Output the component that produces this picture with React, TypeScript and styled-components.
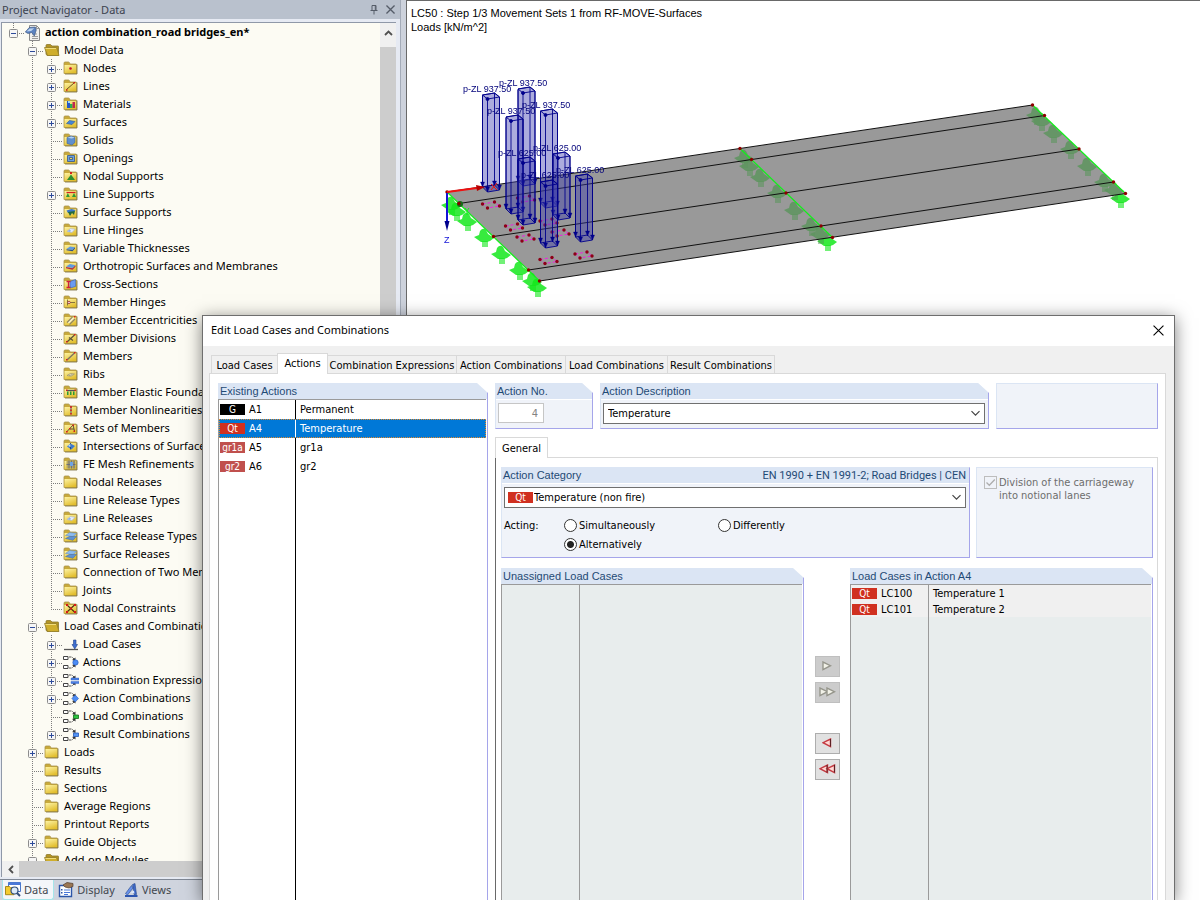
import React from 'react';
import styled, { createGlobalStyle } from 'styled-components';

const GlobalStyle = createGlobalStyle`
  * { box-sizing: border-box; }
  body { margin: 0; background: #cdd2dc; overflow: hidden; }
  button, input, select { font: inherit; color: inherit; margin: 0; }
`;

const uiFont = '"Noto Sans", "Open Sans", sans-serif';
const dialogFont = '"DejaVu Sans Condensed", "DejaVu Sans", sans-serif';
const headFont = '"Liberation Sans", Arial, sans-serif';

/* ---------- desktop ---------- */
const Desktop = styled.div`
  position: relative;
  display: flex;
  height: 100vh;
  min-height: 600px;
  overflow: hidden;
  background: #cdd2dc;
  font: 11px/18px ${uiFont};
  color: #000;
`;

const Navigator = styled.aside`
  width: 401px;
  flex: none;
  display: flex;
  flex-direction: column;
  background: #e6eaf3;
  border-right: 1px solid #a3abb8;
`;

const NavTitle = styled.header`
  height: 19px;
  flex: none;
  display: flex;
  align-items: center;
  gap: 8px;
  padding: 0 5px 0 2px;
  background: #b9c1cd;
  color: #3c4350;
  h1 { flex: 1; margin: 0; font-size: 11px; font-weight: 400; }
`;

const IconButton = styled.button`
  display: flex;
  padding: 0;
  border: 0;
  background: none;
`;

const NavFrame = styled.div`
  flex: 1;
  min-height: 0;
  display: grid;
  grid-template: minmax(0, 1fr) 16px / minmax(0, 1fr) 16px;
  margin: 3px 4px 2px 1px;
  border: solid #8f98a8;
  border-width: 1px 0 0 1px;
  background: #fcfbf3;
`;

const Tree = styled.ul`
  margin: 0;
  padding: 0 0 0 2px;
  list-style: none;
  overflow: hidden;
`;

const TreeRow = styled.li`
  display: flex;
  height: 18px;
  white-space: nowrap;
`;

const Indent = styled.span<{ $line?: boolean }>`
  width: 19px;
  flex: none;
  background: ${p => (p.$line ? 'repeating-linear-gradient(#7d7d7d 0 1px, transparent 1px 2px) 9px 0 / 1px 100% no-repeat' : 'none')};
`;

const Branch = styled.span<{ $end?: boolean }>`
  width: 21px;
  flex: none;
  padding: 6px 0 0 5px;
  background:
    repeating-linear-gradient(#7d7d7d 0 1px, transparent 1px 2px) 9px 0 / 1px ${p => (p.$end ? '10px' : '100%')} no-repeat,
    repeating-linear-gradient(90deg, #7d7d7d 0 1px, transparent 1px 2px) 9px 10px / 11px 1px no-repeat;
`;

const Expander = styled.button`
  display: block;
  width: 9px;
  height: 9px;
  padding: 0;
  border: 0;
  background: none;
  svg { display: block; }
`;

const NodeIcon = styled.span`
  width: 20px;
  flex: none;
  padding-top: 2px;
  svg { display: block; }
`;

const NodeLabel = styled.span<{ $bold?: boolean }>`
  font-weight: ${p => (p.$bold ? 700 : 400)};
`;

const VScroll = styled.div`
  display: flex;
  flex-direction: column;
  background: #f0f0f0;
  button { height: 24px; padding-bottom: 4px; align-items: center; justify-content: center; }
`;
const VThumb = styled.div`
  flex: 1;
  background: #cdcdcd;
`;
const HScroll = styled.div`
  grid-column: 1 / -1;
  display: flex;
  background: #f0f0f0;
  button { width: 17px; align-items: center; justify-content: center; }
`;
const HThumb = styled.div`
  width: 240px;
  background: #cdcdcd;
`;

const NavTabs = styled.nav`
  height: 21px;
  flex: none;
  display: flex;
  gap: 2px;
  padding-left: 2px;
  border-top: 1px solid #7f8794;
  background: #cfd4de;
  line-height: 20px;
`;
const NavTab = styled.button<{ $active?: boolean }>`
  display: flex;
  align-items: center;
  gap: 3px;
  height: 20px;
  padding: 0 5px 0 2px;
  border: solid #a6e6ea;
  border-width: ${p => (p.$active ? '0 1px 1px' : '0')};
  border-radius: 0 0 3px 3px;
  background: ${p => (p.$active ? '#f4f6f9' : 'none')};
  color: #42474f;
`;

/* ---------- work area ---------- */
const Viewport = styled.main`
  flex: 1;
  min-width: 0;
  margin-left: 5px;
  border: solid #696969;
  border-width: 1px 0 0 1px;
  background: #fff;
  overflow: hidden;
`;
const ViewTitle = styled.p`
  height: 36px;
  margin: 0;
  padding: 5px 4px 0;
  font: 11px/14px ${headFont};
`;
const Drawing = styled.svg`
  display: block;
  width: 793px;
  height: 280px;
  text { font: 9px ${headFont}; }
`;

/* ---------- dialog ---------- */
const Dialog = styled.section`
  position: absolute;
  left: 202px;
  right: 25px;
  top: 315px;
  bottom: 0;
  display: flex;
  flex-direction: column;
  border: solid #6e6e6e;
  border-width: 1px 1px 0;
  background: #f0f0f0;
  box-shadow: 0 3px 16px rgba(0, 0, 0, 0.5);
  font: 11px/13px ${dialogFont};
`;
const DialogTitle = styled.header`
  height: 30px;
  flex: none;
  display: flex;
  align-items: center;
  justify-content: space-between;
  padding: 0 10px 2px 8px;
  background: #fff;
  h2 { margin: 0; font: 400 11px/16px ${uiFont}; }
`;
const TabStrip = styled.div`
  height: 27px;
  flex: none;
  display: flex;
  align-items: flex-end;
  padding-left: 9px;
`;
const Tab = styled.button<{ $active?: boolean; $width: number }>`
  position: relative;
  width: ${p => p.$width}px;
  height: ${p => (p.$active ? 21 : 18)}px;
  margin: 0 0 ${p => (p.$active ? -1 : 0)}px -1px;
  padding: ${p => (p.$active ? '0 0 1px' : '1px 0 0')};
  border: 1px solid #d9d9d9;
  border-bottom: 0;
  background: ${p => (p.$active ? '#fff' : '#f0f0f0')};
  z-index: ${p => (p.$active ? 1 : 0)};
  white-space: nowrap;
`;
const TabPanel = styled.div`
  flex: 1;
  min-height: 0;
  display: grid;
  grid-template-columns: 270px minmax(0, 1fr);
  gap: 7px;
  margin: 0 8px 0 6px;
  padding: 9px 7px 0 8px;
  border: 1px solid #d9d9d9;
  border-bottom: 0;
  background: #fff;
`;
const Details = styled.div`
  display: flex;
  flex-direction: column;
  min-height: 0;
`;
const TopRow = styled.div`
  display: grid;
  grid-template-columns: 98px minmax(0, 1fr) 162px;
  gap: 7px;
  height: 46px;
  margin-bottom: 8px;
`;

const Group = styled.section<{ $cut?: boolean; $plain?: boolean; $open?: boolean }>`
  display: flex;
  flex-direction: column;
  min-height: 0;
  border: 1px solid #a5a5ea;
  border-left-color: #dbe5f4;
  border-top-color: #dbe5f4;
  border-bottom-width: ${p => (p.$open ? 0 : 1)}px;
  background: ${p => (p.$plain ? '#fff' : '#f0f3f9')};
  clip-path: ${p => (p.$cut ? 'polygon(0 0, calc(100% - 11px) 0, 100% 10px, 100% 100%, 0 100%)' : 'none')};
`;
const GroupHead = styled.h3`
  display: flex;
  justify-content: space-between;
  height: 16px;
  flex: none;
  margin: 0;
  padding: 0 3px 0 1px;
  border-bottom: 1px solid #fff;
  background: #dbe5f4;
  color: #1f4a75;
  font: 400 11px/15px ${headFont};
`;
const Standard = styled.span`
  font-family: Roboto, sans-serif;
`;

const List = styled.div<{ $shaded?: boolean }>`
  flex: 1;
  min-height: 0;
  border: solid #9a9a9a;
  border-width: 1px 0 0 1px;
  margin: -1px 1px 0 -1px;
  background: ${p => (p.$shaded ? '#e8eded' : '#fff')};
`;
const Columns = styled.table<{ $first: number; $line: string; $row: number }>`
  width: 100%;
  height: 100%;
  table-layout: fixed;
  border-collapse: separate;
  border-spacing: 0;
  td { padding: 0; height: ${p => p.$row}px; white-space: nowrap; }
  td:first-child { width: ${p => p.$first}px; border-right: 1px solid ${p => p.$line}; }
  td + td { padding-left: 4px; }
  tr:last-child td { height: auto; }
`;
const Row = styled.tr<{ $selected?: boolean; $gray?: boolean }>`
  background: ${p => (p.$selected ? '#0078d7' : p.$gray ? '#f0f0f0' : 'transparent')};
  color: ${p => (p.$selected ? '#fff' : '#000')};
  outline: ${p => (p.$selected ? '1px dotted #e08a30' : 'none')};
  outline-offset: -1px;
  && td:first-child { ${p => (p.$selected ? 'border-right-color: #fff;' : '')} }
`;
const Tag = styled.span<{ $color: string }>`
  display: inline-block;
  width: 25px;
  height: 11px;
  margin: 0 4px 1px 1px;
  background: ${p => p.$color};
  color: #fff;
  font-size: 10px;
  line-height: 11px;
  text-align: center;
  vertical-align: middle;
`;

const NumberBox = styled.input`
  width: 46px;
  height: 20px;
  margin: 3px 0 0 2px;
  padding: 0 5px;
  border: 1px solid #c6c6c6;
  background: #fff;
  color: #838383;
  text-align: right;
`;
const Combo = styled.div`
  position: relative;
  display: flex;
  align-items: center;
  height: 21px;
  margin: 3px 3px 0 2px;
  border: 1px solid #707070;
  background: #fff;
  svg { position: absolute; right: 3px; pointer-events: none; }
  select {
    flex: 1;
    min-width: 0;
    height: 19px;
    padding: 0 4px;
    border: 0;
    background: none;
    appearance: none;
  }
`;
const TaggedCombo = styled(Combo)`
  span { margin: 0 0 0 3px; }
  select { padding: 0 1px; }
`;

const GeneralTab = styled.button`
  position: relative;
  z-index: 1;
  width: 53px;
  height: 21px;
  flex: none;
  margin-bottom: -1px;
  padding: 0;
  border: 1px solid #d9d9d9;
  border-bottom: 0;
  background: #fff;
`;
const GeneralPanel = styled.div`
  flex: 1;
  min-height: 0;
  display: grid;
  grid-template-rows: 91px minmax(0, 1fr);
  gap: 10px;
  padding: 9px 4px 0 5px;
  border: solid #d9d9d9;
  border-width: 1px 1px 0 1px;
  border-left-color: #696969;
`;
const CategoryRow = styled.div`
  display: grid;
  grid-template-columns: minmax(0, 1fr) 177px;
  gap: 6px;
`;
const Acting = styled.fieldset`
  display: grid;
  grid-template-columns: 60px 154px 1fr;
  margin: 8px 0 0 2px;
  padding: 0;
  border: 0;
  line-height: 19px;
`;
const ActingName = styled.span`
  grid-row: span 2;
`;
const Choice = styled.label`
  display: flex;
  align-items: center;
  gap: 2px;
  input {
    appearance: none;
    width: 13px;
    height: 13px;
    border: 1px solid #333;
    border-radius: 50%;
    background: #fff;
  }
  input:checked { background: radial-gradient(#222 0 3px, #fff 4px); }
`;
const Division = styled.label`
  display: flex;
  gap: 2px;
  padding: 8px 7px;
  color: #6d6d6d;
`;
const CheckWrap = styled.span`
  position: relative;
  width: 13px;
  height: 13px;
  flex: none;
  input { appearance: none; display: block; width: 13px; height: 13px; border: 1px solid #bdbdbd; }
  svg { position: absolute; left: 1px; top: 1px; }
`;
const Transfer = styled.div`
  display: grid;
  grid-template-columns: minmax(0, 1fr) 46px minmax(0, 1fr);
  min-height: 0;
`;
const MoveColumn = styled.div`
  display: flex;
  flex-direction: column;
  align-items: center;
  gap: 5px;
  padding-top: 88px;
`;
const MoveButton = styled.button<{ $space?: boolean }>`
  display: flex;
  align-items: center;
  justify-content: center;
  width: 25px;
  height: 21px;
  flex: none;
  margin-top: ${p => (p.$space ? 25 : 0)}px;
  padding: 0 0 1px;
  border: 1px solid #adadad;
  background: #e1e1e1;
  &:disabled { background: #cccccc; border-color: #bfbfbf; }
`;

/* ---------- icons ---------- */
const overlays: Record<string, React.ReactNode> = {
  none: null,
  dot: <circle cx="7.5" cy="7.5" r="1.3" fill="#c8102a" />,
  line: <><path d="M3.500 10.500 11 4" stroke="#6b5520" strokeWidth="1" /><path d="M3 10.200h1.500v1.500H3zM10.500 3h1.500v1.500h-1.500z" fill="#d01818" /></>,
  materials: <><path d="M4 4h3v7H4z" fill="#2557c8" /><path d="M7 7h2.500v4H7z" fill="#28b24a" /><path d="M9.500 5H12v6H9.500z" fill="#c02a50" /><path d="M5 4h2v2H5z" fill="#9ed8f4" /></>,
  surface: <path d="m3.500 8.500 3-3 5.500 1-3 3z" fill="#4686d8" stroke="#2b5a9a" strokeWidth=".6" />,
  solid: <><path d="m4 4.500 4-1.500 4 1.300v5.200L9 12l-5-1.500z" fill="#5f8fce" stroke="#3f6296" strokeWidth=".6" /><path d="m4.300 4.700 4-1.300 3.500 1.100-3 1z" fill="#b4d2f2" /></>,
  opening: <><path d="M4.500 4.500h7v6h-7z" fill="#6b9fe0" stroke="#31558c" strokeWidth=".8" /><path d="M6.500 6.500h3v2h-3z" fill="#e8d060" stroke="#31558c" strokeWidth=".8" /></>,
  nsupport: <><path d="m8 5.500 4 5.500H4z" fill="#2c8f30" /><path d="M7 3h2v2H7z" fill="#d82020" /></>,
  lsupport: <><path d="M3.500 5.500h9" stroke="#d82020" strokeWidth="1.200" /><path d="m4.800 6 2 4H3zM11 6l2 4H9z" fill="#2c9a35" /></>,
  ssupport: <><path d="m3.500 5.500 5-1.500 4 1-2 2.500-5.500.5z" fill="#3c78c8" /><path d="m5 7 2 4 2-3 2 2 1-4z" fill="#246a3c" /></>,
  slabw: <><path d="m4 8.500 3.500-3 4.500.8-3 3.200z" fill="#e6eefc" stroke="#a4b2cc" strokeWidth=".6" /><path d="m4.500 8 2.500-1.500 1 1.500-1.500 1z" fill="#8fb2ea" /></>,
  slab: <><path d="m3.500 8 3.500-2.500 5 .7-2.500 2.800z" fill="#5e9ae0" /><path d="m3.500 8.300 6 .8 2.500-2.800v1.200L9.500 10.300l-6-1z" fill="#284f88" /></>,
  ortho: <><path d="m3 7.500 4-2.500 5.500 1.200L9.500 9z" fill="#5e9ae0" /><path d="m3 8 6.500 1.300 3-3v1.500L9.500 10.700 3 9.200z" fill="#b02a4a" /></>,
  cross: <><path d="m7 4.500 5.500-2v7L7 11z" fill="#6a9af0" stroke="#3460b0" strokeWidth=".6" /><path d="M3.500 4.500h4M5.500 4.500v6M3.500 10.500h4" stroke="#d01f3a" strokeWidth="1.300" /></>,
  mhinge: <><path d="M4.500 4.500v6M6 7.500h6" stroke="#85763c" strokeWidth="1" /><circle cx="6" cy="7.500" r="1.200" fill="#fff" stroke="#a02020" strokeWidth=".8" /></>,
  mecc: <><path d="M4 9.500 9.500 4M6.500 11.500 12 6" stroke="#8d8668" strokeWidth="1.100" /><path d="M5.500 10 10.500 5" stroke="#f6f2d8" strokeWidth="1.300" /><path d="M11 3h1.500v1.500H11z" fill="#d82020" /></>,
  mdiv: <><path d="M4 11 11.500 4M6 6.500l4 3" stroke="#5b5338" strokeWidth="1.200" /><path d="M3 10h1.500v1.500H3zM11 3h1.500v1.500H11z" fill="#d82020" /></>,
  member: <><path d="M4 11 11.500 4" stroke="#7d7660" strokeWidth="1.500" /><path d="M3 10h1.500v1.500H3zM11 3h1.500v1.500H11z" fill="#d82020" /></>,
  rib: <path d="m4 8.500 3.500-2 4 .5-3.500 2.200zM6 8.500l3.500-1" fill="#f0ecd0" stroke="#a0976c" strokeWidth=".8" />,
  foundation: <><path d="M3.500 5.500h9" stroke="#555" strokeWidth="1.300" /><path d="M4 6.500h1.500V10H4zM7 6.500h1.500V10H7zM10 6.500h1.500V10H10z" fill="#2c9a35" /><path d="M3 4.500h1.500V6H3zM11.500 4.500H13V6h-1.500z" fill="#d82020" /></>,
  nonlin: <><path d="M8 3v8.500" stroke="#777" strokeWidth="1.300" /><path d="M7.200 3h1.600v2H7.200zM7.200 6.500h1.600v1.500H7.200zM7.200 10h1.600v1.500H7.200z" fill="#d82020" /></>,
  sets: <><path d="M4 10.500 10 4l1.500 6M7 8h4" stroke="#5b5338" fill="none" strokeWidth="1" /><path d="M3 10h1.700v1.500H3zM9.500 3.500H11V5H9.500zM10.500 9.500H12V11h-1.500zM6 7h1.500v1.500H6z" fill="#d82020" /></>,
  inter: <><path d="m4 7.500 3.500-3 4.500 2.500-3.500 3.500z" fill="#3c7ad0" /><path d="M7.500 4v6.500" stroke="#173c78" strokeWidth=".8" /><path d="m5 7 2.500-2v3z" fill="#bfe0ff" /></>,
  mesh: <><path d="M3.500 3.500h9v8h-9z" fill="#b8a860" /><path d="M6 3.500v8M8.500 3.500v8M3.500 7.500h9M11 3.500v8" stroke="#5a6484" strokeWidth=".8" /><path d="M7 5h3v4H7z" fill="#6ea4e4" /></>,
  release: <><path d="m2.500 6.500 4-3 7 .8-3.500 3.400z" fill="#8dbcf0" stroke="#5f84b4" strokeWidth=".5" /><path d="m2.500 9.500 4-2 7-.2-3.500 4z" fill="#5f92d4" stroke="#44689a" strokeWidth=".5" /></>,
  constraint: <><path d="m4 4 7.500 7M11.500 4 4 11" stroke="#4a3010" strokeWidth="1.100" /><path d="M3 3h2v2H3zM11 3h2v2h-2zM3 10h2v2H3zM11 10h2v2h-2zM7 6.500h2v2H7z" fill="#d81818" /></>,
};

const Folder = ({ kind }: { kind: string }) => (
  <svg width="15" height="14" viewBox="0 0 15 14">
    <defs>
      <linearGradient id="fold" x1="0" y1="0" x2="0.5" y2="1">
        <stop offset="0" stopColor="#fdf3a4" />
        <stop offset="1" stopColor="#e2be2e" />
      </linearGradient>
    </defs>
    <path d="M1 2q0-1 1-1h3.500q1 0 1.500 2h6q.5 0 .5.500v9H1z" fill="#c9aa3a" stroke="#a8934c" strokeWidth=".8" />
    <path d="M1.500 4h12v8.500h-12z" fill="url(#fold)" />
    <path d="M2 13h12V3.500" fill="none" stroke="#6f6030" strokeWidth="1" opacity=".75" />
    {overlays[kind]}
  </svg>
);
const OpenFolder = () => (
  <svg width="16" height="14" viewBox="0 0 16 14">
    <path d="M2 11V2.500Q2 1.500 3 1.500h3.500L8 3h6q.5 0 .5.500v9H3z" fill="#b39424" stroke="#8d782c" strokeWidth=".8" />
    <path d="M.5 4.500H12q.5 0 .8.500l2.200 7.500H3.500z" fill="#cfae2c" stroke="#94802e" strokeWidth=".8" />
    <path d="M1.500 5.500h10.500" stroke="#f0dc78" />
  </svg>
);
const LoadCaseIcon = () => (
  <svg width="16" height="14" viewBox="0 0 16 14">
    <path d="M1 12.500h14" stroke="#555" strokeWidth="1.300" />
    <path d="M10.500 3h2.500v4.500h1.500L11.800 12 9 7.500h1.500z" fill="#3f6fd0" stroke="#22438c" strokeWidth=".6" />
  </svg>
);
const comboShape: Record<string, React.ReactNode> = {
  actions: <circle cx="12.500" cy="7.500" r="2.700" fill="#4c8cf4" stroke="#2458b8" strokeWidth=".6" />,
  expr: <path d="M8 5h8v2H8zM8 8.500h8v2H8z" fill="#4c80e4" stroke="#2c5cc0" strokeWidth=".4" />,
  acomb: <path d="m12.200 4 3.300 3.500-3.300 3.500-3.300-3.500z" fill="#4c8cf4" stroke="#2458b8" strokeWidth=".6" />,
  lcomb: <path d="M10.500 6h5v3.500h-5z" fill="#2cc440" stroke="#116a1c" strokeWidth=".8" />,
  rcomb: <path d="M10.500 6h5v3.500h-5z" fill="#5494f4" stroke="#2458b8" strokeWidth=".8" />,
};
const ComboIcon = ({ kind }: { kind: string }) => (
  <svg width="16" height="15" viewBox="0 0 16 15">
    <path d="M.5 1.500h4.500v3H.5zM.5 10.500h4.500v3H.5z" fill="#fff" stroke="#444" />
    <path d="M6 2h3l2.500 2.500M6 13h3l2.500-2.500" fill="none" stroke="#555" strokeDasharray="2.500 1" />
    <path d="M12.500 2.500V6L9 5zM12.500 12.500V9L9 10z" fill="#333" />
    {comboShape[kind]}
  </svg>
);
const ProjectIcon = () => (
  <svg width="16" height="16" viewBox="0 0 16 16">
    <path d="M4.500.5h7l3 3v12h-10z" fill="#f0f0ee" stroke="#8a8a8a" />
    <path d="M11.500.5v3h3M7 9h5M7 11.500h6M7 13.500h6" stroke="#9a9a9a" fill="none" />
    <path d="m.3 7 4-4.500 6-.5 1 3-2 6-2.500-3.500L3 8.500z" fill="#5b82c0" stroke="#36507c" strokeWidth=".6" />
    <path d="m1.500 6.500 3.200-3 4.500-.3-3 2.800z" fill="#bcd3f0" />
  </svg>
);
const NodeGlyph = ({ icon }: { icon: string }) =>
  icon === 'project' ? <ProjectIcon />
    : icon === 'open' ? <OpenFolder />
      : icon === 'loadcase' ? <LoadCaseIcon />
        : icon in comboShape ? <ComboIcon kind={icon} />
          : <Folder kind={icon} />;

const Chevron = () => (
  <svg width="11" height="7" viewBox="0 0 11 7"><path d="m1.500 1.200 4 4 4-4" fill="none" stroke="#444" strokeWidth="1.200" /></svg>
);
const CloseIcon = ({ size, color }: { size: number; color: string }) => (
  <svg width={size} height={size} viewBox="0 0 10 10"><path d="m.5.5 9 9M9.500.5l-9 9" stroke={color} strokeWidth={size > 10 ? 1 : 1.500} /></svg>
);
const MoveArrow = ({ back, twice }: { back?: boolean; twice?: boolean }) => {
  const fill = back ? '#ffd8d4' : '#f2f2e8';
  const stroke = back ? '#c43840' : '#96968c';
  const tri = back ? 'M8.500 1v7.500L1 4.700z' : 'M1 1v7.500l7.500-3.800z';
  return (
    <svg width={twice ? 17 : 10} height="10" viewBox={twice ? '0 0 17 10' : '0 0 10 10'}>
      <path d={tri} fill={fill} stroke={stroke} strokeWidth="1.400" />
      {twice && <path d={tri} transform="translate(7 0)" fill={fill} stroke={stroke} strokeWidth="1.400" />}
      {back && <path d={twice ? 'M8 1v7.500M15.500 1v7.500' : 'M8.500 1v7.500'} stroke="#5c2024" strokeWidth="1" />}
    </svg>
  );
};

/* ---------- tree data ---------- */
type Node = { level: 0 | 1 | 2; label: string; icon: string; box?: '+' | '-' };
const leaf = (label: string, icon = 'none', box?: '+' | '-'): Node => ({ level: 2, label, icon, box });
const nodes: Node[] = [
  { level: 0, label: 'action combination_road bridges_en*', icon: 'project', box: '-' },
  { level: 1, label: 'Model Data', icon: 'open', box: '-' },
  leaf('Nodes', 'dot', '+'),
  leaf('Lines', 'line', '+'),
  leaf('Materials', 'materials', '+'),
  leaf('Surfaces', 'surface', '+'),
  leaf('Solids', 'solid'),
  leaf('Openings', 'opening'),
  leaf('Nodal Supports', 'nsupport'),
  leaf('Line Supports', 'lsupport', '+'),
  leaf('Surface Supports', 'ssupport'),
  leaf('Line Hinges', 'slabw'),
  leaf('Variable Thicknesses', 'slab'),
  leaf('Orthotropic Surfaces and Membranes', 'ortho'),
  leaf('Cross-Sections', 'cross'),
  leaf('Member Hinges', 'mhinge'),
  leaf('Member Eccentricities', 'mecc'),
  leaf('Member Divisions', 'mdiv'),
  leaf('Members', 'member'),
  leaf('Ribs', 'rib'),
  leaf('Member Elastic Foundations', 'foundation'),
  leaf('Member Nonlinearities', 'nonlin'),
  leaf('Sets of Members', 'sets'),
  leaf('Intersections of Surfaces', 'inter'),
  leaf('FE Mesh Refinements', 'mesh'),
  leaf('Nodal Releases'),
  leaf('Line Release Types'),
  leaf('Line Releases', 'slabw'),
  leaf('Surface Release Types', 'release'),
  leaf('Surface Releases', 'release'),
  leaf('Connection of Two Members'),
  leaf('Joints'),
  leaf('Nodal Constraints', 'constraint'),
  { level: 1, label: 'Load Cases and Combinations', icon: 'open', box: '-' },
  leaf('Load Cases', 'loadcase', '+'),
  leaf('Actions', 'actions', '+'),
  leaf('Combination Expressions', 'expr', '+'),
  leaf('Action Combinations', 'acomb', '+'),
  leaf('Load Combinations', 'lcomb'),
  leaf('Result Combinations', 'rcomb', '+'),
  { level: 1, label: 'Loads', icon: 'none', box: '+' },
  { level: 1, label: 'Results', icon: 'none' },
  { level: 1, label: 'Sections', icon: 'none' },
  { level: 1, label: 'Average Regions', icon: 'none' },
  { level: 1, label: 'Printout Reports', icon: 'none' },
  { level: 1, label: 'Guide Objects', icon: 'none', box: '+' },
  { level: 1, label: 'Add-on Modules', icon: 'open', box: '-' },
];

const TreeItem = ({ node, last }: { node: Node; last: boolean }) => (
  <TreeRow>
    {node.level > 0 && <Indent />}
    {node.level > 1 && <Indent $line />}
    <Branch $end={last}>
      {node.box && (
        <Expander aria-label={node.box === '+' ? 'Expand' : 'Collapse'}>
          <svg width="9" height="9" viewBox="0 0 9 9">
            <rect x=".5" y=".5" width="8" height="8" rx="1" fill="#f6f6f6" stroke="#8c8c8c" />
            <path d={node.box === '+' ? 'M2 4.500h5M4.500 2v5' : 'M2 4.500h5'} stroke="#2d4b9a" />
          </svg>
        </Expander>
      )}
    </Branch>
    <NodeIcon><NodeGlyph icon={node.icon} /></NodeIcon>
    <NodeLabel $bold={node.level === 0}>{node.label}</NodeLabel>
  </TreeRow>
);

/* ---------- model drawing ---------- */
const leftNodes = [[447, 192], [459, 203.500], [493.500, 236.500], [528.500, 270], [539.500, 281]];
const midNodes = [[740, 148.500], [751.500, 159.500], [786, 193], [821, 226], [832.500, 237.500]];
const rightNodes = [[1032.500, 105], [1044.500, 115.500], [1079, 149], [1113.500, 182], [1125.500, 193.500]];
const loads = [
  { x: 482.500, top: 93, bottom: 192, label: 'p-ZL 937.50', lx: 463, ly: 92 },
  { x: 518, top: 87, bottom: 186, label: 'p-ZL 937.50', lx: 499, ly: 86 },
  { x: 506, top: 115, bottom: 214, label: 'p-ZL 937.50', lx: 487, ly: 114 },
  { x: 540.500, top: 109, bottom: 208, label: 'p-ZL 937.50', lx: 522, ly: 108 },
  { x: 518, top: 157, bottom: 225, label: 'p-ZL 625.00', lx: 498, ly: 156 },
  { x: 553, top: 152, bottom: 220, label: 'p-ZL 625.00', lx: 533, ly: 151 },
  { x: 540.500, top: 180, bottom: 248, label: 'p-ZL 625.00', lx: 521, ly: 178 },
  { x: 575.500, top: 174, bottom: 242, label: 'p-ZL 625.00', lx: 556, ly: 173 },
];
const wheels = [[490.500, 205], [525.500, 199], [513.500, 227], [525, 238], [548, 222], [560, 233], [548, 260.500], [583, 255]];
const edgeSupports = [[451, 205], [456, 211], [467, 221], [484, 237], [501, 254], [519, 270], [532, 281], [537, 287]];
const midSupports = [[744, 158], [749, 166], [760, 177], [777, 193], [794, 210], [811, 226], [820, 234]];
const rightSupports = [[1036, 115], [1041, 121], [1053, 133], [1070, 149], [1087, 166], [1104, 182], [1114, 190]];

const Support = ({ x, y }: { x: number; y: number }) => (
  <g transform={`translate(${x} ${y})`}>
    <path d="M-2 4h6v6h-6z" opacity=".6" />
    <path d="m-10 0 5-2 1-4q3-4 6-1l2 4 6 4-4 3-3 1h-6z" opacity=".85" />
  </g>
);
const LoadColumn = ({ x, top, bottom }: { x: number; top: number; bottom: number }) => {
  const down = [[0, 3, -5], [5, 6, 0], [12, 0, -6], [17, 4, -2]];
  return (
    <g stroke="#00008b" fill="none" strokeWidth=".9">
      <path d={`M${x} ${top + 2}l12-2 5 4V${bottom - 2}l-12 2-5-5z`} fill="#3a3aae" fillOpacity=".42" />
      <path d={`M${x} ${top + 2}l5 4 12-2-5-4zM${x} ${bottom - 5}l12-2 5 5`} />
      {down.map(([dx, a, b]) => (
        <g key={dx}>
          <path d={`M${x + dx} ${top + a}V${bottom + b}`} />
          <path d={`M${x + dx - 2} ${bottom + b - 5}h4l-2 5z`} fill="#00008b" strokeWidth=".4" />
        </g>
      ))}
      <circle cx={x + 5} cy={top + 6} r="1.500" fill="#00008b" />
    </g>
  );
};

const ModelDrawing = () => (
  <Drawing viewBox="407 37 793 280" role="img" aria-label="Bridge model with moving loads">
    <g fill="#14e81c">
      <Support x={827} y={241} />
      <Support x={1120} y={198} />
    </g>
    <path d="M447 192 1032.500 105l93 88.500L539.500 281z" fill="#999" />
    <g fill="#4f9450" opacity=".8">
      {[...midSupports, ...rightSupports].map(([x, y]) => <Support key={x} x={x} y={y} />)}
    </g>
    <g stroke="#111" strokeWidth="1">
      {leftNodes.map(([x, y], i) => <line key={x} x1={x} y1={y} x2={rightNodes[i][0]} y2={rightNodes[i][1]} />)}
    </g>
    <g fill="#14e81c">
      {edgeSupports.map(([x, y]) => <Support key={x} x={x} y={y} />)}
    </g>
    <g stroke="#12f01a" strokeWidth="1.200">
      {[leftNodes, midNodes, rightNodes].map(n => <line key={n[0][0]} x1={n[0][0]} y1={n[0][1]} x2={n[4][0]} y2={n[4][1]} />)}
    </g>
    <circle cx="460" cy="204" r="3" fill="#146a18" />
    <path d="m465 208 2 3 2-3M467 211v4" stroke="#12f01a" fill="none" />
    <g fill="#8c0000">
      {[...leftNodes, ...midNodes, ...rightNodes].map(([x, y]) => <circle key={x} cx={x} cy={y} r="1.700" />)}
    </g>
    {wheels.map(([x, y]) => (
      <g key={`${x}-${y}`} transform={`translate(${x} ${y})`}>
        <path d="m-8-1 12-2 5 4-12 2z" fill="none" stroke="#f020e0" strokeDasharray="3 2" />
        <g fill="#8c0016">
          <circle cx="-8" cy="-1" r="1.700" /><circle cx="4" cy="-3" r="1.700" />
          <circle cx="9" cy="1" r="1.700" /><circle cx="-3" cy="3" r="1.700" />
        </g>
      </g>
    ))}
    {loads.map(l => <LoadColumn key={`${l.x}-${l.top}`} {...l} />)}
    <g fill="#00007a">
      {loads.map(l => <text key={`${l.lx}-${l.ly}`} x={l.lx} y={l.ly}>{l.label}</text>)}
    </g>
    <path d="M447 192l30-4" stroke="#f01010" strokeWidth="2" />
    <path d="m476 185 9 2-8 4z" fill="#b80000" />
    <path d="m491 184 6 6M497 183l-6 7" stroke="#f01010" />
    <path d="M447 193v30" stroke="#1414d8" strokeWidth="2" />
    <path d="m444.500 221 2.500 10 2.500-10z" fill="#00008b" />
    <text x="444" y="243" fill="#1414d8">Z</text>
  </Drawing>
);

/* ---------- page ---------- */
const dialogTabs = [
  { name: 'Load Cases', width: 67 },
  { name: 'Actions', width: 51 },
  { name: 'Combination Expressions', width: 130 },
  { name: 'Action Combinations', width: 110 },
  { name: 'Load Combinations', width: 103 },
  { name: 'Result Combinations', width: 108 },
];
const actions = [
  { tag: 'G', color: '#000', no: 'A1', name: 'Permanent' },
  { tag: 'Qt', color: '#d03020', no: 'A4', name: 'Temperature' },
  { tag: 'gr1a', color: '#c0504d', no: 'A5', name: 'gr1a' },
  { tag: 'gr2', color: '#c0504d', no: 'A6', name: 'gr2' },
];

export default function App() {
  return (
    <Desktop>
      <GlobalStyle />
      <Navigator>
        <NavTitle>
          <h1>Project Navigator - Data</h1>
          <IconButton aria-label="Pin">
            <svg width="8" height="10" viewBox="0 0 8 10"><path d="M2 .5h4v5H2zM.5 5.500h7M4 5.500V9.500M5.300 1v4" fill="none" stroke="#555c68" /></svg>
          </IconButton>
          <IconButton aria-label="Close navigator"><CloseIcon size={9} color="#555c68" /></IconButton>
        </NavTitle>
        <NavFrame>
          <Tree>
            {nodes.map((n, i) => (
              <TreeItem key={i} node={n} last={n.level === 0 || (n.level === 2 && nodes[i + 1]?.level === 1)} />
            ))}
          </Tree>
          <VScroll>
            <IconButton aria-label="Scroll up"><svg width="9" height="6" viewBox="0 0 9 6"><path d="m1 5 3.500-3.500L8 5" fill="none" stroke="#505050" strokeWidth="1.800" /></svg></IconButton>
            <VThumb />
          </VScroll>
          <HScroll>
            <IconButton aria-label="Scroll left"><svg width="6" height="9" viewBox="0 0 6 9"><path d="M5 1 1.500 4.500 5 8" fill="none" stroke="#505050" strokeWidth="1.800" /></svg></IconButton>
            <HThumb />
          </HScroll>
        </NavFrame>
        <NavTabs>
          <NavTab $active>
            <svg width="16" height="15" viewBox="0 0 16 15">
              <path d="M3.500.5h12v9h-12z" fill="#fff" stroke="#4a78c8" /><path d="M3.500.5h12V3h-12z" fill="#4a78d8" />
              <path d="M.5 4.500h4l1 1.200h3.500v7H.5z" fill="#f4cc30" stroke="#a88a1c" />
              <circle cx="9.500" cy="8.500" r="3.500" fill="#dcebfa" stroke="#33507c" strokeWidth="1.200" /><path d="m12 11 3 3" stroke="#33507c" strokeWidth="2" />
            </svg>
            Data
          </NavTab>
          <NavTab>
            <svg width="16" height="16" viewBox="0 0 16 16">
              <path d="M1.500 3.500h12v11h-12z" fill="#fff" stroke="#2c55a8" strokeWidth="1.400" />
              <path d="M3 7h1.500v1.500H3zM3 10h1.500v1.500H3z" fill="#2c55a8" /><path d="M6 8h6M6 10.500h6M6 12.500h4" stroke="#4a78d8" />
              <path d="m5 3 4-2.500 6 1v3L11 6 7 5z" fill="#9a7654" stroke="#503c2c" strokeWidth=".7" />
            </svg>
            Display
          </NavTab>
          <NavTab>
            <svg width="15" height="15" viewBox="0 0 15 15">
              <path d="M8.500 1.500 11 .5l1.500 11H10L9.500 8z" fill="#3f68c8" stroke="#24488c" strokeWidth=".6" />
              <path d="M7.500 2.500 9 5l-5.500 7-2-1.500z" fill="#6a92ea" stroke="#24488c" strokeWidth=".6" />
              <path d="m6.500 9.500 3.500-2 .5 3z" fill="#dce8fc" />
              <path d="M1 13h12.500" stroke="#2c55b0" strokeWidth="2" />
            </svg>
            Views
          </NavTab>
        </NavTabs>
      </Navigator>

      <Viewport>
        <ViewTitle>LC50 : Step 1/3 Movement Sets 1 from RF-MOVE-Surfaces<br />Loads [kN/m^2]</ViewTitle>
        <ModelDrawing />
      </Viewport>

      <Dialog role="dialog" aria-labelledby="dlg-title">
        <DialogTitle>
          <h2 id="dlg-title">Edit Load Cases and Combinations</h2>
          <IconButton aria-label="Close"><CloseIcon size={11} color="#000" /></IconButton>
        </DialogTitle>
        <TabStrip role="tablist">
          {dialogTabs.map(t => <Tab key={t.name} role="tab" $width={t.width} $active={t.name === 'Actions'}>{t.name}</Tab>)}
        </TabStrip>
        <TabPanel>
          <Group $cut $plain $open>
            <GroupHead>Existing Actions</GroupHead>
            <List>
              <Columns $first={77} $line="#000" $row={19}>
                <tbody>
                  {actions.map(a => (
                    <Row key={a.no} $selected={a.no === 'A4'}>
                      <td><Tag $color={a.color}>{a.tag}</Tag>{a.no}</td>
                      <td>{a.name}</td>
                    </Row>
                  ))}
                  <Row><td /><td /></Row>
                </tbody>
              </Columns>
            </List>
          </Group>

          <Details>
            <TopRow>
              <Group $cut>
                <GroupHead as="label" htmlFor="no">Action No.</GroupHead>
                <NumberBox id="no" defaultValue="4" disabled />
              </Group>
              <Group $cut>
                <GroupHead as="label" htmlFor="desc">Action Description</GroupHead>
                <Combo>
                  <select id="desc"><option>Temperature</option></select>
                  <Chevron />
                </Combo>
              </Group>
              <Group />
            </TopRow>
            <GeneralTab role="tab">General</GeneralTab>
            <GeneralPanel>
              <CategoryRow>
                <Group>
                  <GroupHead as="label" htmlFor="cat">Action Category<Standard>EN 1990 + EN 1991-2; Road Bridges | CEN</Standard></GroupHead>
                  <TaggedCombo>
                    <Tag $color="#d03020">Qt</Tag>
                    <select id="cat"><option>Temperature (non fire)</option></select>
                    <Chevron />
                  </TaggedCombo>
                  <Acting>
                    <ActingName>Acting:</ActingName>
                    <Choice><input type="radio" name="acting" />Simultaneously</Choice>
                    <Choice><input type="radio" name="acting" />Differently</Choice>
                    <Choice><input type="radio" name="acting" defaultChecked />Alternatively</Choice>
                  </Acting>
                </Group>
                <Group>
                  <Division>
                    <CheckWrap>
                      <input type="checkbox" defaultChecked disabled />
                      <svg width="11" height="11" viewBox="0 0 11 11"><path d="m1.500 5.500 2.800 2.800L9.800 2.500" fill="none" stroke="#adadad" strokeWidth="1.300" /></svg>
                    </CheckWrap>
                    <span>Division of the carriageway<br />into notional lanes</span>
                  </Division>
                </Group>
              </CategoryRow>
              <Transfer>
                <Group $cut $plain $open>
                  <GroupHead>Unassigned Load Cases</GroupHead>
                  <List $shaded>
                    <Columns $first={78} $line="#9a9a9a" $row={16}><tbody><Row><td /><td /></Row></tbody></Columns>
                  </List>
                </Group>
                <MoveColumn>
                  <MoveButton disabled aria-label="Add selected"><MoveArrow /></MoveButton>
                  <MoveButton disabled aria-label="Add all"><MoveArrow twice /></MoveButton>
                  <MoveButton $space aria-label="Remove selected"><MoveArrow back /></MoveButton>
                  <MoveButton aria-label="Remove all"><MoveArrow back twice /></MoveButton>
                </MoveColumn>
                <Group $cut $plain $open>
                  <GroupHead>Load Cases in Action A4</GroupHead>
                  <List $shaded>
                    <Columns $first={78} $line="#9a9a9a" $row={16}>
                      <tbody>
                        <Row $gray><td><Tag $color="#d03020">Qt</Tag>LC100</td><td>Temperature 1</td></Row>
                        <Row $gray><td><Tag $color="#d03020">Qt</Tag>LC101</td><td>Temperature 2</td></Row>
                        <Row><td /><td /></Row>
                      </tbody>
                    </Columns>
                  </List>
                </Group>
              </Transfer>
            </GeneralPanel>
          </Details>
        </TabPanel>
      </Dialog>
    </Desktop>
  );
}
